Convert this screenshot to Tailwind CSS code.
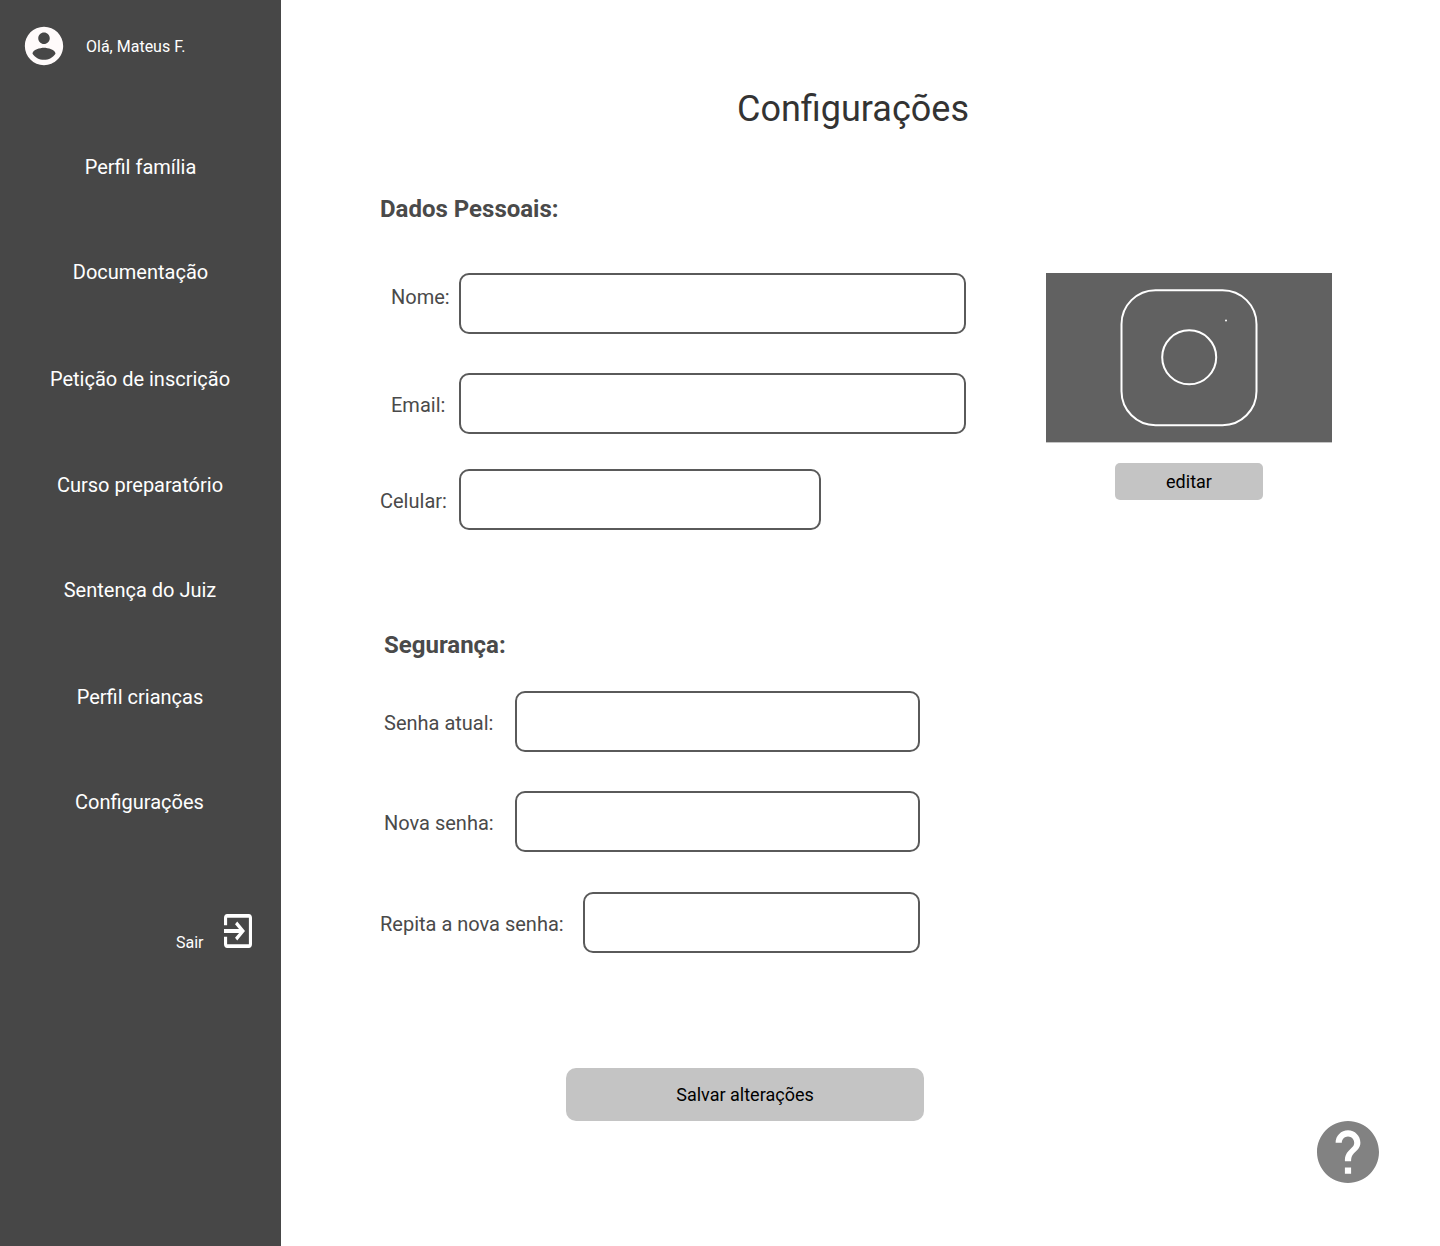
<!DOCTYPE html>
<html lang="pt-BR">
<head>
<meta charset="utf-8">
<title>Configurações</title>
<script src="https://cdn.jsdelivr.net/npm/@tailwindcss/browser@4"></script>
</head>
<body class="flex h-[1246px] w-[1440px] overflow-hidden bg-white font-['Roboto',sans-serif] text-xl leading-6 text-[#4a4a4a]">
  <aside class="flex w-[281px] shrink-0 flex-col bg-[#474747] text-white">
    <div class="flex items-center pl-[21px] pt-[23px]">
      <svg class="size-[46px] fill-[#fffbfb]" viewBox="0 0 24 24"><path d="M12 2C6.48 2 2 6.48 2 12s4.48 10 10 10 10-4.48 10-10S17.52 2 12 2zm0 3c1.66 0 3 1.34 3 3s-1.34 3-3 3-3-1.34-3-3 1.34-3 3-3zm0 14.2c-2.5 0-4.71-1.28-6-3.22.03-1.99 4-3.08 6-3.08 1.99 0 5.97 1.09 6 3.08-1.29 1.94-3.5 3.22-6 3.22z"/></svg>
      <span class="ml-[19px] pt-0.5 text-base">Olá, Mateus F.</span>
    </div>
    <nav class="mt-[86px] flex flex-col text-center">
      <a class="mb-[81px]">Perfil família</a>
      <a class="mb-[83px]">Documentação</a>
      <a class="mb-[82px] pr-px">Petição de inscrição</a>
      <a class="mb-[81px] pr-px">Curso preparatório</a>
      <a class="mb-[83px] pr-px">Sentença do Juiz</a>
      <a class="mb-[81px] pr-px">Perfil crianças</a>
      <a class="pr-[2px]">Configurações</a>
    </nav>
    <div class="mt-[100px] flex items-start justify-end pr-[29px]">
      <span class="mr-[20.5px] mt-[17px] text-base">Sair</span>
      <svg class="h-[34px] w-7 fill-white" viewBox="3 3 18 18" preserveAspectRatio="none"><path d="M10.09 15.59L11.5 17l5-5-5-5-1.41 1.41L12.67 11H3v2h9.67l-2.58 2.59zM19 3H5c-1.11 0-2 .9-2 2v4h2V5h14v14H5v-4H3v4c0 1.1.89 2 2 2h14c1.1 0 2-.9 2-2V5c0-1.1-.9-2-2-2z"/></svg>
    </div>
  </aside>

  <main class="relative flex grow flex-col pl-[99px] pt-[88px]">
    <h1 class="ml-[357px] text-4xl leading-[42px] text-[#333333]">Configurações</h1>
    <h2 class="mt-[65px] text-2xl leading-7 font-bold">Dados Pessoais:</h2>

    <div class="mt-[50px] flex items-start">
      <div class="flex w-[586px] flex-col">
        <div class="flex h-[61px] items-start">
          <label class="w-[79px] pl-[11px] pt-3">Nome:</label>
          <div class="h-[61px] w-[507px] rounded-[10px] border-2 border-[#5a5a5a]"></div>
        </div>
        <div class="mt-[39px] flex h-[61px] items-start">
          <label class="w-[79px] pl-[11px] pt-5">Email:</label>
          <div class="h-[61px] w-[507px] rounded-[10px] border-2 border-[#5a5a5a]"></div>
        </div>
        <div class="mt-[35px] flex h-[61px] items-start">
          <label class="w-[79px] pt-5">Celular:</label>
          <div class="h-[61px] w-[362px] rounded-[10px] border-2 border-[#5a5a5a]"></div>
        </div>
      </div>
      <div class="ml-20 flex w-[286px] flex-col items-center">
        <svg class="h-[170px] w-[286px] border-b border-[#c4c4c4] bg-[#616161]" viewBox="0 0 286 169" fill="none" stroke="white" stroke-width="2">
          <rect x="75.5" y="17.2" width="135" height="135" rx="34"/>
          <circle cx="143.2" cy="84.3" r="27"/>
          <circle cx="180" cy="47.4" r="1" fill="white" stroke="none"/>
        </svg>
        <button class="mt-5 h-[37px] w-[148px] rounded-[5px] bg-[#c4c4c4] text-lg text-black">editar</button>
      </div>
    </div>

    <h2 class="ml-1 mt-[101px] text-2xl leading-7 font-bold">Segurança:</h2>
    <div class="mt-8 flex items-start">
      <label class="w-[135px] pl-1 pt-5">Senha atual:</label>
      <div class="h-[61px] w-[405px] rounded-[10px] border-2 border-[#5a5a5a]"></div>
    </div>
    <div class="mt-[39px] flex items-start">
      <label class="w-[135px] pl-1 pt-5">Nova senha:</label>
      <div class="h-[61px] w-[405px] rounded-[10px] border-2 border-[#5a5a5a]"></div>
    </div>
    <div class="mt-10 flex items-start">
      <label class="w-[203px] pt-5">Repita a nova senha:</label>
      <div class="h-[61px] w-[337px] rounded-[10px] border-2 border-[#5a5a5a]"></div>
    </div>
    <button class="ml-[186px] mt-[115px] h-[53px] w-[358px] rounded-[10px] bg-[#c4c4c4] text-lg text-black">Salvar alterações</button>

    <svg class="absolute bottom-[63px] right-[61px] size-[62px] fill-[#828282]" viewBox="2 2 20 20"><path d="M12 2C6.48 2 2 6.48 2 12s4.48 10 10 10 10-4.48 10-10S17.52 2 12 2zm1 17h-2v-2h2v2zm2.07-7.75l-.9.92C13.45 12.9 13 13.5 13 15h-2v-.5c0-1.1.45-2.1 1.17-2.83l1.24-1.26c.37-.36.59-.86.59-1.41 0-1.1-.9-2-2-2s-2 .9-2 2H8c0-2.21 1.79-4 4-4s4 1.79 4 4c0 .88-.36 1.68-.93 2.25z"/></svg>
  </main>
</body>
</html>
